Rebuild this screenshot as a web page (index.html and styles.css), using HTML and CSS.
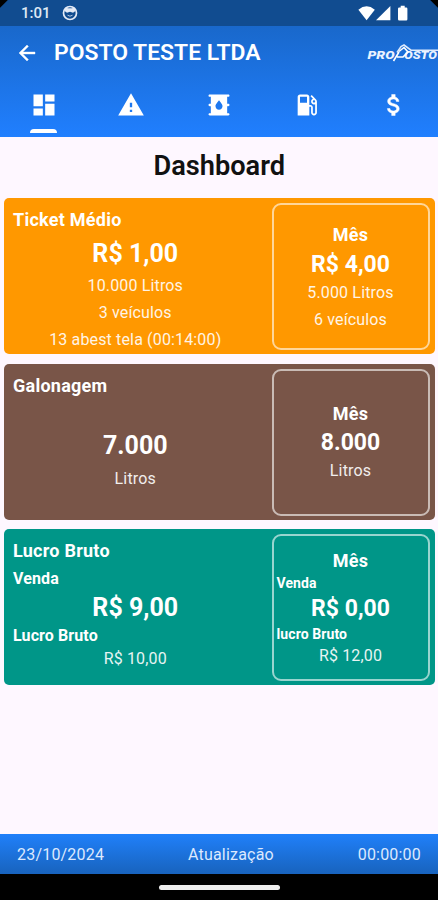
FILE: index.html
```html
<!DOCTYPE html>
<html lang="pt-BR">
<head>
    <meta charset="UTF-8">
    <meta name="viewport" content="width=device-width, initial-scale=1.0">
    <title>Posto Teste LTDA</title>
    <link rel="stylesheet" href="styles.css">
</head>
<body>
    <div class="status">
        <span class="clock">1:01</span>
        <svg class="face" width="16" height="16" viewBox="0 0 16 16">
            <circle cx="8" cy="8" r="6.5" fill="none" stroke="#e4eaf6" stroke-width="1.7"/>
            <path d="M2.5 6 3.5 2.5 6 3.3h4l2.5-.8 1 3.5-2.5 1.8L8 6.7 5 7.8z" fill="#e4eaf6"/>
            <path d="M5.5 10.2q2.5 2 5 0" fill="none" stroke="#b8c9e3" stroke-width="1"/>
        </svg>
        <svg class="signals" width="52" height="16" viewBox="0 0 52 16" fill="#fff">
            <path d="M8.6 15.3.4 4.7Q8.6-2.1 16.8 4.7z"/>
            <path d="M32.4 1v14.3H18z"/>
            <path d="M42.7.8h4v1.7h1.5q1.2 0 1.2 1.2v10.6q0 1.2-1.2 1.2h-7q-1.2 0-1.2-1.2V3.7q0-1.2 1.2-1.2h1.5z"/>
        </svg>
    </div>

    <header>
        <div class="appbar">
            <svg class="back" width="24" height="24" viewBox="0 0 24 24">
                <path d="M20 11H7.83l5.59-5.59L12 4l-8 8 8 8 1.41-1.41L7.83 13H20z"/>
            </svg>
            <h1>POSTO TESTE LTDA</h1>
            <svg class="logo" width="72" height="20" viewBox="0 0 72 20">
                <g class="logo-text">
                    <text x="1.5" y="16" textLength="27" lengthAdjust="spacingAndGlyphs">PRO</text>
                    <text x="38" y="16" textLength="33" lengthAdjust="spacingAndGlyphs">OSTO</text>
                </g>
                <path d="M31 9.5 35 3.5 38 2l7 5.2H72" fill="none" stroke="#dce9fc" stroke-width="1.6"/>
                <path d="M27.5 18 33 9M31 14h6l5-5-4-4.5-5 4" fill="none" stroke="#fff" stroke-width="1.6"/>
            </svg>
        </div>
        <nav>
            <a class="tab active">
                <svg width="28" height="28" viewBox="0 0 24 24"><path d="M3 13h8V3H3v10zm0 8h8v-6H3v6zm10 0h8V11h-8v10zm0-18v6h8V3h-8z"/></svg>
            </a>
            <a class="tab">
                <svg width="28" height="28" viewBox="0 0 24 24"><path d="M1 21h22L12 2 1 21zm12-3h-2v-2h2v2zm0-4h-2v-4h2v4z"/></svg>
            </a>
            <a class="tab">
                <svg width="28" height="28" viewBox="0 0 24 24"><path d="M20 13c.55 0 1-.45 1-1s-.45-1-1-1h-1V5h1c.55 0 1-.45 1-1s-.45-1-1-1H4c-.55 0-1 .45-1 1s.45 1 1 1h1v6H4c-.55 0-1 .45-1 1s.45 1 1 1h1v6H4c-.55 0-1 .45-1 1s.45 1 1 1h16c.55 0 1-.45 1-1s-.45-1-1-1h-1v-6h1zm-8 3c-1.66 0-3-1.32-3-2.95 0-1.3.52-1.67 3-5.05 2.47 3.36 3 3.74 3 5.05 0 1.63-1.34 2.95-3 2.95z"/></svg>
            </a>
            <a class="tab">
                <svg width="28" height="28" viewBox="0 0 24 24"><path d="M19.77 7.23l.01-.01-3.72-3.72L15 4.56l2.11 2.11c-.94.36-1.61 1.26-1.61 2.33 0 1.38 1.12 2.5 2.5 2.5.36 0 .69-.08 1-.21v7.21c0 .55-.45 1-1 1s-1-.45-1-1V14c0-1.1-.9-2-2-2h-1V5c0-1.1-.9-2-2-2H6c-1.1 0-2 .9-2 2v16h10v-7.5h1.5v5c0 1.38 1.12 2.5 2.5 2.5s2.5-1.12 2.5-2.5V9c0-.69-.28-1.32-.73-1.77zM12 10H6V5h6v5zm6 0c-.55 0-1-.45-1-1s.45-1 1-1 1 .45 1 1-.45 1-1 1z"/></svg>
            </a>
            <a class="tab money">
                <svg width="28" height="28" viewBox="0 0 24 24"><path d="M11.8 10.9c-2.27-.59-3-1.2-3-2.15 0-1.09 1.01-1.85 2.7-1.85 1.78 0 2.44.85 2.5 2.1h2.21c-.07-1.72-1.12-3.3-3.21-3.81V3h-3v2.16c-1.94.42-3.5 1.68-3.5 3.61 0 2.31 1.91 3.46 4.7 4.13 2.5.6 3 1.48 3 2.41 0 .69-.49 1.79-2.7 1.79-2.06 0-2.87-.92-2.98-2.1h-2.2c.12 2.19 1.76 3.42 3.68 3.83V21h3v-2.15c1.95-.37 3.5-1.5 3.5-3.55 0-2.84-2.43-3.81-4.7-4.4z"/></svg>
            </a>
        </nav>
    </header>

    <main>
        <h2>Dashboard</h2>

        <section class="card ticket">
            <div class="today">
                <h3>Ticket Médio</h3>
                <p class="value">R$ 1,00</p>
                <p class="detail">10.000 Litros</p>
                <p class="detail">3 veículos</p>
                <p class="detail">13 abest tela (00:14:00)</p>
            </div>
            <div class="month">
                <h4>Mês</h4>
                <p class="value">R$ 4,00</p>
                <p class="detail">5.000 Litros</p>
                <p class="detail">6 veículos</p>
            </div>
        </section>

        <section class="card galonagem">
            <div class="today">
                <h3>Galonagem</h3>
                <p class="value">7.000</p>
                <p class="detail">Litros</p>
            </div>
            <div class="month">
                <h4>Mês</h4>
                <p class="value">8.000</p>
                <p class="detail">Litros</p>
            </div>
        </section>

        <section class="card lucro">
            <div class="today">
                <h3>Lucro Bruto</h3>
                <p class="label">Venda</p>
                <p class="value">R$ 9,00</p>
                <p class="label">Lucro Bruto</p>
                <p class="detail">R$ 10,00</p>
            </div>
            <div class="month">
                <h4>Mês</h4>
                <p class="label">Venda</p>
                <p class="value">R$ 0,00</p>
                <p class="label">lucro Bruto</p>
                <p class="detail">R$ 12,00</p>
            </div>
        </section>
    </main>

    <footer>
        <span>23/10/2024</span>
        <span>Atualização</span>
        <span>00:00:00</span>
    </footer>
    <div class="navbar"><div class="handle"></div></div>
</body>
</html>
```
FILE: styles.css
```css
* {
    box-sizing: border-box;
}

body {
    display: flex;
    flex-direction: column;
    height: 900px;
    margin: 0;
    background: #fef7ff;
    color: #fff;
    font-family: Roboto, sans-serif;
    overflow: hidden;
}

h1, h2, h3, h4, p {
    margin: 0;
}

/* system bar */
.status {
    display: flex;
    align-items: center;
    height: 26px;
    padding: 0 28px 0 21px;
    background: linear-gradient(135deg, #000 5px, transparent 6px), linear-gradient(225deg, #000 5px, transparent 6px), #114c90;
}

.clock {
    width: 41px;
    color: #dfe8f5;
    font-size: 15px;
    font-weight: 500;
}

.signals {
    margin-left: auto;
}

/* app header */
header {
    height: 111px;
    background: linear-gradient(#1968cb, #207fff);
}

.appbar {
    display: flex;
    align-items: center;
    height: 53px;
    padding-left: 15px;
}

.back {
    fill: #fff;
    stroke: #fff;
    stroke-width: 0.4;
}

h1 {
    margin-left: 15px;
    font-size: 22.9px;
    font-weight: 600;
    line-height: 28px;
    white-space: nowrap;
}

.logo {
    margin-left: auto;
}

.logo-text {
    fill: #eaf2ff;
    font-size: 10px;
    font-style: italic;
    font-weight: 900;
}

nav {
    display: grid;
    grid-template-columns: repeat(5, 1fr);
    height: 58px;
}

.tab {
    display: flex;
    flex-direction: column;
    align-items: center;
    justify-content: space-between;
    padding-top: 12px;
}

.tab svg {
    fill: #fff;
}

.money svg {
    stroke: #fff;
    stroke-width: 0.4;
}

.active::after {
    content: "";
    width: 27px;
    height: 4px;
    margin-bottom: 4px;
    border-radius: 4px 4px 0 0;
    background: #fff;
}

/* cards */
main {
    flex: 1;
    padding: 13px 3.5px 0 4px;
}

h2 {
    height: 48px;
    color: #111;
    font-size: 27.2px;
    font-weight: 600;
    line-height: 32px;
    text-align: center;
}

.card {
    display: flex;
    height: 156px;
    margin-bottom: 9.5px;
    padding: 5px 5px 5px 9px;
    border-radius: 5px;
}

.ticket {
    background: #ff9800;
}

.galonagem {
    background: #795548;
}

.lucro {
    background: #009688;
}

.today {
    flex: 1;
    padding-right: 14px;
}

h3, h4 {
    font-size: 18px;
    font-weight: 700;
    letter-spacing: 0.25px;
}

h3 {
    line-height: 33px;
}

h4 {
    line-height: 28px;
    text-align: center;
}

.value {
    font-size: 25px;
    font-weight: 700;
    line-height: 34px;
    text-align: center;
}

.detail {
    font-size: 16px;
    letter-spacing: 0.15px;
    line-height: 27px;
    text-align: center;
    opacity: 0.9;
}

.label {
    font-size: 16px;
    font-weight: 700;
    letter-spacing: 0.1px;
}

.month {
    display: flex;
    flex-direction: column;
    justify-content: center;
    width: 158px;
    height: 147px;
    border: 2px solid rgba(255, 255, 255, 0.6);
    border-radius: 9px;
}

.month .value {
    font-size: 23px;
    line-height: 30px;
}

.ticket .value {
    margin-top: 1px;
    margin-bottom: 1px;
}

.ticket .month .value {
    margin-bottom: -1px;
}

.galonagem .today .value {
    margin-top: 27px;
    margin-bottom: 2px;
}

.galonagem .month .detail {
    margin-top: -1px;
}

.lucro .today .label {
    line-height: 24px;
}

.lucro .today .value {
    line-height: 33px;
}

.lucro .today .detail {
    line-height: 21px;
}

.lucro .month .label {
    padding-left: 3px;
    font-size: 14px;
    line-height: 18px;
}

.lucro .month h4 {
    line-height: 27px;
}

.lucro .month .value {
    line-height: 33px;
}

.lucro .month .detail {
    line-height: 25px;
}

/* bottom bars */
footer {
    display: flex;
    align-items: center;
    justify-content: space-between;
    height: 40px;
    padding: 0 17px;
    background: linear-gradient(#2080fa, #1863bd);
    color: #dce9ff;
    font-size: 16px;
    letter-spacing: 0.2px;
}

.navbar {
    display: flex;
    justify-content: center;
    height: 26px;
    padding-top: 11px;
    background: #000;
}

.handle {
    width: 121px;
    height: 5px;
    border-radius: 3px;
    background: #eee;
}
```
